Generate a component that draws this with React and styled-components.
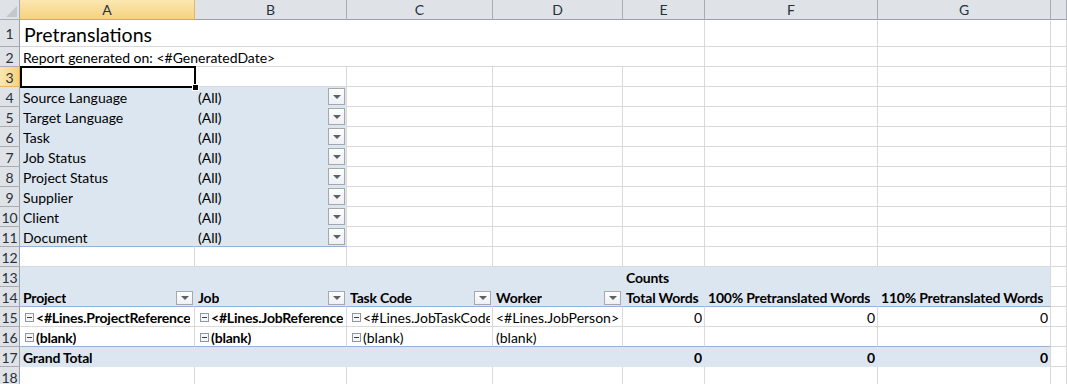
import React from 'react';
import styled, { createGlobalStyle } from 'styled-components';

const GlobalStyle = createGlobalStyle`
  html, body {
    margin: 0;
    padding: 0;
    background: #fff;
    overflow: hidden;
  }
`;

const COLS = [175, 152, 146, 130, 82, 173, 173];
const LETTERS = ['A', 'B', 'C', 'D', 'E', 'F', 'G'];

const PIVOT = '#dce6f1';
const GRID = '#d9d9d9';
const PIVOT_LINE = '#95b3d7';
const HEAD_BG = '#dfe3e8';
const HEAD_LINE = '#a9adb3';

const Sheet = styled.div`
  display: grid;
  grid-template-columns: 20px ${COLS.map(w => w + 'px').join(' ')} 1fr;
  grid-template-rows: 20px 27px repeat(17, 20px);
  width: 1067px;
  height: 384px;
  overflow: hidden;
  font-family: Lato, "Liberation Sans", sans-serif;
  font-size: 14px;
  color: #000;
`;

const Corner = styled.div`
  position: relative;
  background: ${HEAD_BG};
  border-right: 1px solid ${HEAD_LINE};
  border-bottom: 1px solid ${HEAD_LINE};

  &::after {
    content: '';
    position: absolute;
    right: 2px;
    bottom: 2px;
    border-style: solid;
    border-width: 0 0 11px 11px;
    border-color: transparent transparent #c4c8cd transparent;
  }
`;

const ColHead = styled.div`
  display: flex;
  align-items: center;
  justify-content: center;
  background: ${p => (p.$active ? 'linear-gradient(#fbe7b0, #f6d27f)' : HEAD_BG)};
  border-right: 1px solid ${p => (p.$active ? '#e8b95a' : HEAD_LINE)};
  border-bottom: 1px solid ${p => (p.$active ? '#eaa63a' : '#9c9fa4')};
  color: #27313c;
  font-size: 14px;
`;

const RowHead = styled.div`
  display: flex;
  align-items: center;
  justify-content: center;
  padding-top: 1px;
  background: ${p => (p.$active ? 'linear-gradient(90deg, #fbe7b0, #f6d27f)' : HEAD_BG)};
  border-right: 1px solid ${p => (p.$active ? '#eaa63a' : '#9c9fa4')};
  border-bottom: 1px solid ${p => (p.$active ? '#e8b95a' : HEAD_LINE)};
  color: #27313c;
  font-size: 14px;
`;

const Cell = styled.div`
  position: relative;
  display: flex;
  align-items: center;
  justify-content: ${p => (p.$align === 'right' ? 'flex-end' : 'flex-start')};
  grid-column: span ${p => p.$span || 1};
  min-width: 0;
  padding: ${p => (p.$title ? '2px 2px 0 4px' : '2px 2px 0 3px')};
  background: ${p => p.$bg || '#fff'};
  border-right: 1px solid ${p => p.$right || GRID};
  border-bottom: 1px solid ${p => p.$bottom || GRID};
  font-weight: ${p => (p.$bold ? 700 : 400)};
  letter-spacing: ${p => (p.$bold ? '-0.2px' : '0')};
  font-size: ${p => (p.$title ? '19.5px' : '14px')};
  white-space: nowrap;
  overflow: ${p => (p.$spill ? 'visible' : 'hidden')};
  z-index: ${p => (p.$spill ? 1 : 0)};
`;

const Selection = styled.span`
  position: absolute;
  left: 0;
  top: -1px;
  right: -2px;
  bottom: -2px;
  border: 2px solid #000;
  pointer-events: none;

  &::after {
    content: '';
    position: absolute;
    right: -5px;
    bottom: -5px;
    width: 5px;
    height: 5px;
    background: #000;
    border: 1px solid #fff;
  }
`;

const Label = styled.span`
  overflow: hidden;
  text-overflow: clip;
`;

const Dropdown = styled.span`
  flex: none;
  display: flex;
  align-items: center;
  justify-content: center;
  margin-left: auto;
  margin-right: -1px;
  align-self: flex-end;
  margin-bottom: 1px;
  width: 15px;
  height: ${p => (p.$short ? '12px' : '15px')};
  background: linear-gradient(#fdfdfd, #eef0f3);
  border: 1px solid #a5a8ad;

  &::after {
    content: '';
    border-style: solid;
    border-width: 4px 4px 0 4px;
    border-color: #5b5f66 transparent transparent transparent;
  }
`;

const Collapse = styled.span`
  flex: none;
  position: relative;
  width: 7px;
  height: 7px;
  margin: 0 2px 0 2px;
  border: 1px solid #8f97a3;
  background: #f4f6f8;

  &::after {
    content: '';
    position: absolute;
    left: 1px;
    right: 1px;
    top: 3px;
    height: 1px;
    background: #3b3f45;
  }
`;

const empty = n => Array.from({ length: n }, () => ({}));

const filters = [
  'Source Language',
  'Target Language',
  'Task',
  'Job Status',
  'Project Status',
  'Supplier',
  'Client',
  'Document',
];

const pivotHeads = ['Project', 'Job', 'Task Code', 'Worker'];

const rows = [
  [
    { span: 5, text: 'Pretranslations', title: true },
    ...empty(3),
  ],
  [
    { span: 5, text: 'Report generated on: <#GeneratedDate>' },
    ...empty(3),
  ],
  [{ selected: true }, ...empty(7)],
  ...filters.map((name, i) => {
    const last = i === filters.length - 1;
    const bottom = last ? PIVOT_LINE : PIVOT;
    return [
      { text: name, bg: PIVOT, right: PIVOT, bottom },
      { text: '(All)', bg: PIVOT, bottom, dropdown: true },
      ...empty(6),
    ];
  }),
  empty(8),
  [
    ...empty(4).map(() => ({ bg: PIVOT, right: PIVOT, bottom: PIVOT })),
    { text: 'Counts', bold: true, bg: PIVOT, right: PIVOT, bottom: PIVOT, spill: true },
    { bg: PIVOT, right: PIVOT, bottom: PIVOT },
    { bg: PIVOT, bottom: PIVOT },
    {},
  ],
  [
    ...pivotHeads.map(h => ({ text: h, bold: true, bg: PIVOT, right: PIVOT, bottom: PIVOT_LINE, dropdown: 'short' })),
    { text: 'Total Words', bold: true, bg: PIVOT, right: PIVOT, bottom: PIVOT_LINE },
    { text: '100% Pretranslated Words', bold: true, bg: PIVOT, right: PIVOT, bottom: PIVOT_LINE },
    { text: '110% Pretranslated Words', bold: true, bg: PIVOT, bottom: PIVOT_LINE },
    {},
  ],
  [
    { text: '<#Lines.ProjectReference', bold: true, collapse: true },
    { text: '<#Lines.JobReference', bold: true, collapse: true },
    { text: '<#Lines.JobTaskCode', collapse: true },
    { text: '<#Lines.JobPerson>' },
    { text: '0', align: 'right' },
    { text: '0', align: 'right' },
    { text: '0', align: 'right' },
    {},
  ],
  [
    { text: '(blank)', bold: true, collapse: true, bottom: PIVOT_LINE },
    { text: '(blank)', bold: true, collapse: true, bottom: PIVOT_LINE },
    { text: '(blank)', collapse: true, bottom: PIVOT_LINE },
    { text: '(blank)', bottom: PIVOT_LINE },
    { bottom: PIVOT_LINE },
    { bottom: PIVOT_LINE },
    { bottom: PIVOT_LINE },
    {},
  ],
  [
    { text: 'Grand Total', bold: true, bg: PIVOT, right: PIVOT, bottom: PIVOT, spill: true },
    ...empty(3).map(() => ({ bg: PIVOT, right: PIVOT, bottom: PIVOT })),
    { text: '0', bold: true, align: 'right', bg: PIVOT, right: PIVOT, bottom: PIVOT },
    { text: '0', bold: true, align: 'right', bg: PIVOT, right: PIVOT, bottom: PIVOT },
    { text: '0', bold: true, align: 'right', bg: PIVOT, bottom: PIVOT },
    {},
  ],
  empty(8),
];

const App = () => (
  <>
    <GlobalStyle />
    <Sheet>
      <Corner />
      {LETTERS.map(l => (
        <ColHead key={l} $active={l === 'A'}>
          {l}
        </ColHead>
      ))}
      <ColHead />

      {rows.map((cells, r) => (
        <React.Fragment key={r}>
          <RowHead $active={r === 2}>{r + 1}</RowHead>
          {cells.map((c, i) => (
            <Cell
              key={i}
              $span={c.span}
              $bg={c.bg}
              $right={c.right}
              $bottom={c.bottom}
              $bold={c.bold}
              $align={c.align}
              $title={c.title}
              $spill={c.spill || c.span || c.selected}
            >
              {c.selected && <Selection />}
              {c.collapse && <Collapse />}
              {c.text && <Label>{c.text}</Label>}
              {c.dropdown && <Dropdown $short={c.dropdown === 'short'} />}
            </Cell>
          ))}
        </React.Fragment>
      ))}
    </Sheet>
  </>
);

export default App;
